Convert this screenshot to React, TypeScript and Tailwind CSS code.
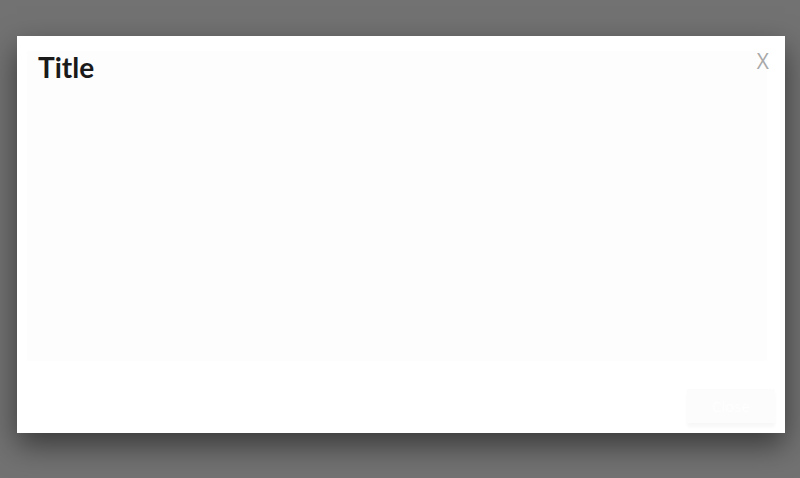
export default function App() {
  return (
    <div className="h-[478px] w-[800px] overflow-hidden bg-[#727272] pl-[17px] pt-[36px]" style={{ fontFamily: '"Open Sans", "Liberation Sans", sans-serif' }}>
      {/* Modal */}
      <div className="relative flex h-[397px] w-[768px] flex-col bg-white shadow-[0_12px_28px_rgba(0,0,0,0.5)]">
        <button className="absolute right-[16px] top-[15px] text-[21px] font-normal leading-none text-[#a8a8a8]">
          X
        </button>

        {/* Body */}
        <div className="ml-[10px] mr-[18px] mt-[15px] h-[310px] bg-[#fdfdfd] px-[11px] pt-[2px]">
          <h1 className="font-['Lato'] text-[28px] font-bold leading-[28px] text-[#1a1a1a]">Title</h1>
        </div>

        {/* Footer */}
        <div className="mt-auto flex justify-end pb-[10px] pr-[10px]">
          <button className="h-[34px] w-[88px] bg-[#fcfcfc] text-[15px] text-white shadow-[0_4px_3px_rgba(0,0,0,0.03)]">
            Close
          </button>
        </div>
      </div>
    </div>
  );
}
